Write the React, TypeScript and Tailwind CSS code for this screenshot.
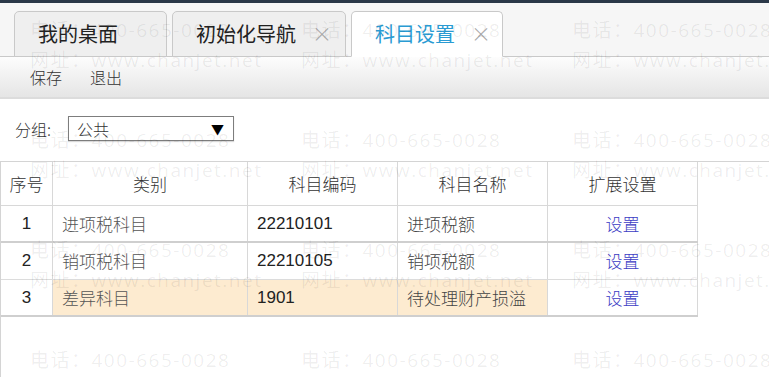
const rows = [
  { no: "1", type: "进项税科目", code: "22210101", name: "进项税额", hl: false, thick: true },
  { no: "2", type: "销项税科目", code: "22210105", name: "销项税额", hl: false, thick: false },
  { no: "3", type: "差异科目", code: "1901", name: "待处理财产损溢", hl: true, thick: true },
];

function Tab({ label, active, closable, width }: { label: string; active?: boolean; closable?: boolean; width: string }) {
  return (
    <div
      className={`${width} h-[46px] -mb-px flex items-center pl-[23px] rounded-t-[5px] border border-[#c9c9c9] ${
        active ? "bg-white border-b-white" : "bg-[#efefef]"
      }`}
    >
      <span className={`text-[20px] ${active ? "text-[#2a9bd3]" : "text-[#222]"}`}>{label}</span>
      {closable && <span className="ml-[16px] text-[20px] leading-none font-light text-[#a5a5a5]">×</span>}
    </div>
  );
}

export default function App() {
  return (
    <div className="relative w-[769px] h-[377px] overflow-hidden bg-white font-['Noto_Sans_CJK_SC',sans-serif]">
      <div className="h-[3px] bg-[#2b3848]" />

      {/* tabs */}
      <div className="h-[54px] pt-[8px] px-[14px] flex items-start gap-[5px] bg-[#f6f6f6] border-b border-[#c9c9c9]">
        <Tab label="我的桌面" width="w-[153px]" />
        <Tab label="初始化导航" width="w-[174px]" closable />
        <Tab label="科目设置" width="w-[152px]" active closable />
      </div>

      {/* toolbar */}
      <div className="h-[42px] flex items-center gap-[28px] pl-[30px] bg-gradient-to-b from-[#fdfdfd] to-[#e5e5e5] border-b-2 border-[#dcdcdc] text-[16px] font-light text-[#333]">
        <span>保存</span>
        <span>退出</span>
      </div>

      {/* filter */}
      <div className="pt-[17px] pb-[20px] pl-[15px] flex items-center text-[16px] font-light text-[#333]">
        <span>分组:</span>
        <div className="ml-[17px] w-[166px] h-[25px] border border-[#7d7d7d] shadow-[0_1px_1px_rgba(0,0,0,0.15)] flex items-center justify-between pl-[8px] pr-[9px]">
          <span>公共</span>
          <span className="text-[13px] text-black">▼</span>
        </div>
      </div>

      {/* grid */}
      <div className="h-[300px] border-t border-l border-[#d4d4d4]">
        <div className="w-[697px]">
          <div className="flex h-[44px] border-b border-[#d8d8d8] text-[17px] font-light text-[#333]">
            <div className="w-[52px] flex items-center justify-center border-r border-[#d8d8d8]">序号</div>
            <div className="w-[195px] flex items-center justify-center border-r border-[#d8d8d8]">类别</div>
            <div className="w-[150px] flex items-center justify-center border-r border-[#d8d8d8]">科目编码</div>
            <div className="w-[150px] flex items-center justify-center border-r border-[#d8d8d8]">科目名称</div>
            <div className="w-[150px] flex items-center justify-center border-r border-[#d8d8d8]">扩展设置</div>
          </div>
          {rows.map((r) => (
            <div
              key={r.no}
              className={`flex h-[37px] text-[17px] ${r.thick ? "border-b-2 border-[#cfcfcf]" : "border-b border-[#dcdcdc]"}`}
            >
              <div className="w-[52px] flex items-center justify-center border-r border-[#d8d8d8] font-['Liberation_Sans'] text-[#222]">
                {r.no}
              </div>
              <div className={`w-[195px] flex items-center pl-[9px] border-r border-[#d8d8d8] font-light text-[#555] ${r.hl ? "bg-[#fdebd0]" : ""}`}>
                {r.type}
              </div>
              <div className={`w-[150px] flex items-center pl-[9px] border-r border-[#d8d8d8] font-['Liberation_Sans'] text-[#222] ${r.hl ? "bg-[#fdebd0]" : ""}`}>
                {r.code}
              </div>
              <div className={`w-[150px] flex items-center pl-[9px] border-r border-[#d8d8d8] font-light text-[#444] ${r.hl ? "bg-[#fdebd0]" : ""}`}>
                {r.name}
              </div>
              <div className="w-[150px] flex items-center justify-center border-r border-[#d8d8d8] font-light text-[#3b3bc4]">
                设置
              </div>
            </div>
          ))}
        </div>
      </div>

      {/* watermark */}
      <div className="pointer-events-none absolute inset-0 grid grid-cols-[repeat(3,271px)] auto-rows-[110px] pl-[30px] pt-[15px] font-['Open_Sans','Noto_Sans_CJK_SC',sans-serif] text-[19px] tracking-[1.5px] leading-[30px] text-black/[0.07]">
        {Array.from({ length: 12 }).map((_, i) => (
          <div key={i} className="whitespace-nowrap">
            <div>电话：400-665-0028</div>
            <div>网址：www.chanjet.net</div>
          </div>
        ))}
      </div>
    </div>
  );
}
